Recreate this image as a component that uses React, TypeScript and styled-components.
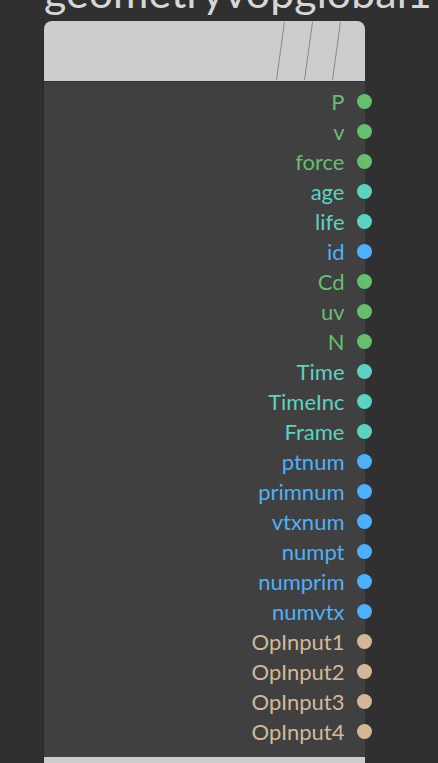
import styled, { createGlobalStyle } from 'styled-components'

type PortKind = 'geo' | 'attr' | 'id' | 'input'

interface Port {
  name: string
  kind: PortKind
}

const portColors: Record<PortKind, string> = {
  geo: '#66bf6f',
  attr: '#5cd3c2',
  id: '#4cb1fb',
  input: '#d4b797',
}

const ports: Port[] = [
  { name: 'P', kind: 'geo' },
  { name: 'v', kind: 'geo' },
  { name: 'force', kind: 'geo' },
  { name: 'age', kind: 'attr' },
  { name: 'life', kind: 'attr' },
  { name: 'id', kind: 'id' },
  { name: 'Cd', kind: 'geo' },
  { name: 'uv', kind: 'geo' },
  { name: 'N', kind: 'geo' },
  { name: 'Time', kind: 'attr' },
  { name: 'TimeInc', kind: 'attr' },
  { name: 'Frame', kind: 'attr' },
  { name: 'ptnum', kind: 'id' },
  { name: 'primnum', kind: 'id' },
  { name: 'vtxnum', kind: 'id' },
  { name: 'numpt', kind: 'id' },
  { name: 'numprim', kind: 'id' },
  { name: 'numvtx', kind: 'id' },
  { name: 'OpInput1', kind: 'input' },
  { name: 'OpInput2', kind: 'input' },
  { name: 'OpInput3', kind: 'input' },
  { name: 'OpInput4', kind: 'input' },
]

function App() {
  return (
    <>
      <GlobalStyle />
      <Canvas>
        <NodeTitle>geometryvopglobal1</NodeTitle>
        <Node>
          <Header>
            <Hatch width="72" height="60" viewBox="0 0 72 60">
              <line x1="12.5" y1="1" x2="4.5" y2="59" />
              <line x1="40.5" y1="1" x2="32.5" y2="59" />
              <line x1="68.5" y1="1" x2="60.5" y2="59" />
            </Hatch>
          </Header>
          <Body>
            {ports.map((port) => (
              <PortRow key={port.name}>
                <PortLabel $color={portColors[port.kind]}>{port.name}</PortLabel>
                <PortDot $color={portColors[port.kind]} />
              </PortRow>
            ))}
          </Body>
          <Footer />
        </Node>
      </Canvas>
    </>
  )
}

export default App

const GlobalStyle = createGlobalStyle`
  html, body {
    margin: 0;
    padding: 0;
    background: #303030;
    overflow: hidden;
  }
`

const Canvas = styled.div`
  width: 438px;
  height: 763px;
  overflow: hidden;
  background: #303030;
  font-family: Lato, 'Open Sans', sans-serif;
`

const NodeTitle = styled.div`
  margin: -37px 0 0 44px;
  height: 58px;
  font-size: 43px;
  line-height: 58px;
  color: #d6d6d6;
  white-space: nowrap;
`

const Node = styled.div`
  width: 321px;
  margin-left: 43px;
  border-left: 1px solid #2a2a2a;
  display: flex;
  flex-direction: column;
`

const Header = styled.div`
  height: 60px;
  display: flex;
  justify-content: flex-end;
  background: #cdcdcd;
  border-radius: 8px 8px 0 0;
  border-bottom: 1px solid #333333;
`

const Hatch = styled.svg`
  margin-right: 21px;
  stroke: #8a8a8a;
  stroke-width: 1;
`

const Body = styled.div`
  background: #404040;
  padding: 4px 0 11px;
  display: flex;
  flex-direction: column;
`

const PortRow = styled.div`
  height: 30px;
  display: flex;
  align-items: center;
  justify-content: flex-end;
  gap: 12px;
`

const PortLabel = styled.span<{ $color: string }>`
  font-size: 22px;
  color: ${(props) => props.$color};
`

const PortDot = styled.span<{ $color: string }>`
  width: 15px;
  height: 15px;
  border-radius: 50%;
  margin-right: -6.5px;
  background: ${(props) => props.$color};
`

const Footer = styled.div`
  height: 20px;
  background: #cdcdcd;
`
